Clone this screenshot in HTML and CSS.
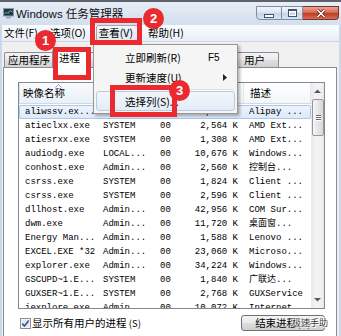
FILE: index.html
```html
<!DOCTYPE html>
<html>
<head>
<meta charset="utf-8">
<title>Windows 任务管理器</title>
<link rel="stylesheet" href="styles.css">
</head>
<body>
<div class="window">
  <div class="titlebar">
    <svg class="app-icon" width="11" height="11" viewBox="0 0 11 11">
      <rect x="0.5" y="0.5" width="10" height="7.5" fill="#24344f" stroke="#8b9ab0"/>
      <polyline points="1.5,6 3.5,4 5,5.5 7,2.5 9.5,4" fill="none" stroke="#4fd14a" stroke-width="1"/>
      <rect x="3" y="8.5" width="5" height="2" fill="#9aa7b8"/>
    </svg>
    <span class="title">Windows 任务管理器</span>
    <div class="caption-buttons">
      <div class="cap-btn cap-min"><span class="min-glyph"></span></div>
      <div class="cap-btn cap-max"><span class="max-glyph"></span></div>
      <div class="cap-btn cap-close">
        <svg width="10" height="9" viewBox="0 0 10 9"><path d="M1.5 1 L8.5 8 M8.5 1 L1.5 8" stroke="#5a1b12" stroke-width="3"/><path d="M1.5 1 L8.5 8 M8.5 1 L1.5 8" stroke="#fff" stroke-width="1.6"/></svg>
      </div>
    </div>
  </div>
  <div class="client">
    <div class="menubar">
      <span class="menu-item">文件(F)</span>
      <span class="menu-item">选项(O)</span>
      <span class="menu-item open">查看(V)</span>
      <span class="menu-item">帮助(H)</span>
    </div>
    <div class="tabs">
      <span class="tab tab-first">应用程序</span>
      <span class="tab selected">进程</span>
      <span class="tab">服务</span>
      <span class="tab">性能</span>
      <span class="tab">联网</span>
      <span class="tab">用户</span>
    </div>
    <div class="panel">
      <div class="listview">
        <div class="list-content">
          <div class="list-header">
            <div class="hcell sorted">映像名称<svg class="sort-arrow" width="7" height="4" viewBox="0 0 7 4"><path d="M0.5 3.5 L3.5 0.5 L6.5 3.5" fill="none" stroke="#8aa2c2" stroke-width="1"/></svg></div>
            <div class="hcell">用户名</div>
            <div class="hcell">CPU</div>
            <div class="hcell">内存</div>
            <div class="hcell">描述</div>
          </div>
          <div class="rows">
            <div class="row selected"><span>aliwssv.ex...</span><span>SYSTEM</span><span>00</span><span>11,340 K</span><span>Alipay ...</span></div>
            <div class="row"><span>atieclxx.exe</span><span>SYSTEM</span><span>00</span><span>2,564 K</span><span>AMD Ext...</span></div>
            <div class="row"><span>atiesrxx.exe</span><span>SYSTEM</span><span>00</span><span>1,308 K</span><span>AMD Ext...</span></div>
            <div class="row"><span>audiodg.exe</span><span>LOCAL...</span><span>00</span><span>10,676 K</span><span>Windows...</span></div>
            <div class="row"><span>conhost.exe</span><span>Admin...</span><span>00</span><span>2,560 K</span><span>控制台...</span></div>
            <div class="row"><span>csrss.exe</span><span>SYSTEM</span><span>00</span><span>1,824 K</span><span>Client ...</span></div>
            <div class="row"><span>csrss.exe</span><span>SYSTEM</span><span>00</span><span>2,596 K</span><span>Client ...</span></div>
            <div class="row"><span>dllhost.exe</span><span>Admin...</span><span>00</span><span>42,956 K</span><span>COM Sur...</span></div>
            <div class="row"><span>dwm.exe</span><span>Admin...</span><span>00</span><span>11,720 K</span><span>桌面窗...</span></div>
            <div class="row"><span>Energy Man...</span><span>Admin...</span><span>00</span><span>1,588 K</span><span>Lenovo ...</span></div>
            <div class="row"><span>EXCEL.EXE *32</span><span>Admin...</span><span>00</span><span>23,060 K</span><span>Microso...</span></div>
            <div class="row"><span>explorer.exe</span><span>Admin...</span><span>00</span><span>34,224 K</span><span>Windows...</span></div>
            <div class="row"><span>GSCUPD~1.E...</span><span>SYSTEM</span><span>00</span><span>1,840 K</span><span>广联达...</span></div>
            <div class="row"><span>GUXSER~1.E...</span><span>SYSTEM</span><span>00</span><span>2,768 K</span><span>GUXService</span></div>
            <div class="row"><span>iexplore.exe</span><span>Admin...</span><span>00</span><span>10,072 K</span><span>Internet...</span></div>
          </div>
        </div>
        <div class="scrollbar">
          <div class="sb-arrow"><svg width="7" height="4" viewBox="0 0 7 4"><path d="M0 4 L3.5 0.5 L7 4 Z" fill="#5b5b5b"/></svg></div>
          <div class="sb-thumb"><span class="grip"></span><span class="grip"></span><span class="grip"></span></div>
          <div class="sb-track"></div>
          <div class="sb-arrow"><svg width="7" height="4" viewBox="0 0 7 4"><path d="M0 0 L3.5 3.5 L7 0 Z" fill="#5b5b5b"/></svg></div>
        </div>
      </div>
      <div class="bottom-row">
        <div class="check">
          <svg class="checkbox" width="11" height="11" viewBox="0 0 11 11">
            <rect x="0.5" y="0.5" width="10" height="10" fill="#f4f4f4" stroke="#8e8f8f"/>
            <rect x="2" y="2" width="7" height="7" fill="#e2e6ea"/>
            <path d="M2.2 5.6 L4.4 8 L8.8 2.6" fill="none" stroke="#34569a" stroke-width="1.6"/>
          </svg>
          <span>显示所有用户的进程 <span class="accel-key">(S)</span></span>
        </div>
        <div class="button">结束进程(P)</div>
      </div>
    </div>
  </div>

  <div class="dropdown">
    <div class="dd-item"><span class="dd-label">立即刷新(R)</span><span class="dd-accel">F5</span></div>
    <div class="dd-item"><span class="dd-label">更新速度(U)</span><span class="dd-accel"><svg class="sub-arrow" width="4" height="7" viewBox="0 0 4 7"><path d="M0 0 L4 3.5 L0 7 Z" fill="#222"/></svg></span></div>
    <div class="dd-sep"></div>
    <div class="dd-item hot"><span class="dd-label">选择列(S)...</span></div>
  </div>

  <div class="mark mark-1"></div>
  <div class="mark mark-2"></div>
  <div class="mark mark-3"></div>
  <div class="badge badge-1">1</div>
  <div class="badge badge-2">2</div>
  <div class="badge badge-3">3</div>
  <div class="watermark">极速手助</div>
</div>
</body>
</html>
```

FILE: styles.css
```css
html, body {
  margin: 0;
  padding: 0;
  width: 341px;
  height: 336px;
  overflow: hidden;
}

.window {
  position: relative;
  width: 341px;
  height: 336px;
  overflow: hidden;
  background: #cbd8e8;
  font-family: "Noto Sans CJK SC", "Liberation Sans", sans-serif;
  font-size: 10.5px;
  color: #000;
}

/* ---------- title bar ---------- */
.titlebar {
  height: 25px;
  box-sizing: border-box;
  border-top: 2px solid #5e636b;
  background: linear-gradient(#e7eef7, #d3dfed);
  display: flex;
  align-items: center;
  padding: 0 2px 0 3px;
}
.app-icon {
  flex: none;
  margin-right: 2px;
}
.title {
  font-family: "Liberation Sans", "Noto Sans CJK SC", sans-serif;
  font-size: 11.5px;
  color: #111;
  line-height: 14px;
}
.caption-buttons {
  margin-left: auto;
  align-self: flex-start;
  margin-top: 4px;
  display: flex;
}
.cap-btn {
  height: 14px;
  box-sizing: border-box;
  border: 1px solid #7d8da3;
  display: flex;
  align-items: center;
  justify-content: center;
  background: linear-gradient(#f1f5fa, #dbe4ef 48%, #c6d4e5 52%, #d9e4f1);
}
.cap-min {
  width: 26px;
  border-radius: 0 0 0 4px;
}
.cap-max {
  width: 21px;
  border-left: none;
}
.cap-close {
  width: 36px;
  border-left: none;
  border-color: #7b3327;
  border-radius: 0 0 4px 0;
  background: linear-gradient(#e9a796, #d56650 48%, #bf3b22 52%, #d66e52);
}
.min-glyph {
  width: 8px;
  height: 2px;
  margin-top: 5px;
  background: #fff;
  border: 1px solid #44546c;
}
.max-glyph {
  width: 7px;
  height: 5px;
  border: 1px solid #44546c;
  border-top-width: 2px;
  background: transparent;
  box-shadow: inset 0 0 0 1px #fff;
}

/* ---------- client ---------- */
.client {
  margin: 0 2px;
  height: 311px;
  background: #f0f0f0;
  overflow: hidden;
}
.menubar {
  height: 17px;
  box-sizing: border-box;
  display: flex;
  align-items: center;
  gap: 8px;
  background: linear-gradient(#fbfcfe, #e9eef6);
  border-bottom: 1px solid #cdd5e0;
}
.menu-item {
  line-height: 14px;
  padding: 0 1px;
  border: 1px solid transparent;
  border-radius: 2px;
}
.menu-item.open {
  padding: 0 4px 0 2px;
  border-color: #a3a8ae;
  background: linear-gradient(#f4f7fb, #e1e8f1);
}

/* ---------- tabs ---------- */
.tabs {
  height: 25px;
  display: flex;
  align-items: flex-end;
  padding-left: 2px;
  position: relative;
  z-index: 1;
}
.tab {
  height: 15px;
  box-sizing: border-box;
  line-height: 13px;
  padding: 0 13px;
  border: 1px solid #898c95;
  border-bottom: none;
  border-radius: 2px 2px 0 0;
  margin-right: -1px;
  background: linear-gradient(#f3f3f3, #ebebeb 50%, #dedede 50%, #d2d2d2);
}
.tab-first {
  padding: 0 3px;
}
.tab.selected {
  height: 19px;
  line-height: 16px;
  padding: 0 6px;
  margin: 0 -1px -1px -1px;
  background: #fff;
  position: relative;
  z-index: 2;
}

/* ---------- panel ---------- */
.panel {
  margin: 0 2px 0 1px;
  height: 290px;
  box-sizing: border-box;
  border: 1px solid #898c95;
  background: #fff;
  padding: 14px 0 0 14px;
}
.listview {
  width: 307px;
  height: 227px;
  box-sizing: border-box;
  border: 1px solid #828790;
  display: flex;
  overflow: hidden;
  background: #fff;
}
.list-content {
  width: 292px;
  flex: none;
  overflow: hidden;
}
.list-header,
.row {
  display: grid;
  grid-template-columns: 78px 55px 31px 61px 67px;
}
.list-header {
  height: 21px;
  box-sizing: border-box;
  border-bottom: 1px solid #d5d9df;
  background: linear-gradient(#ffffff, #f3f6fa);
}
.hcell {
  position: relative;
  line-height: 20px;
  padding-left: 6px;
  border-right: 1px solid #e3e7ec;
  white-space: nowrap;
  overflow: hidden;
}
.hcell.sorted {
  padding-left: 4px;
  background: linear-gradient(#f7fafd, #e9f0f8);
  box-shadow: inset 1px 0 0 #d6e2f0;
}
.sort-arrow {
  position: absolute;
  left: 36px;
  top: 1px;
}
.rows {
  padding-top: 1px;
}
.row {
  height: 14px;
  line-height: 14px;
  font-family: "Liberation Mono", "Noto Sans CJK SC", monospace;
  font-size: 9px;
  color: #000;
}
.row span {
  white-space: nowrap;
  overflow: hidden;
}
.row span:nth-child(1) { padding-left: 6px; }
.row span:nth-child(2) { padding-left: 6px; }
.row span:nth-child(3) { padding-left: 8px; }
.row span:nth-child(4) { text-align: right; padding-right: 6px; }
.row span:nth-child(5) { padding-left: 5px; }
.row.selected {
  background: linear-gradient(#eef4fd, #dce9f9);
  box-shadow: inset 0 0 0 1px #aac7ec;
  border-radius: 2px;
}

/* ---------- scrollbar ---------- */
.scrollbar {
  width: 13px;
  flex: none;
  display: flex;
  flex-direction: column;
  background: linear-gradient(to right, #e6e6e6, #f2f2f2 30%, #f2f2f2 70%, #e9e9e9);
  box-shadow: inset 1px 0 0 #ececec;
}
.sb-arrow {
  height: 16px;
  flex: none;
  display: flex;
  align-items: center;
  justify-content: center;
}
.sb-thumb {
  height: 37px;
  flex: none;
  margin: 0 0 0 1px;
  box-sizing: border-box;
  border: 1px solid #979797;
  border-radius: 2px;
  background: linear-gradient(to right, #f5f5f5, #e6e6e6 50%, #d8d8d8);
  display: flex;
  flex-direction: column;
  align-items: center;
  justify-content: center;
  gap: 1px;
}
.grip {
  width: 5px;
  height: 1px;
  background: #6b6b6b;
  box-shadow: 0 1px 0 #fff;
}
.sb-track {
  flex: 1;
}

/* ---------- bottom row ---------- */
.bottom-row {
  width: 307px;
  height: 16px;
  margin-top: 6px;
  display: flex;
  align-items: center;
  justify-content: space-between;
}
.check {
  display: flex;
  align-items: center;
  gap: 1px;
  padding-left: 2px;
  line-height: 14px;
}
.checkbox {
  flex: none;
}
.accel-key {
  font-size: 9.5px;
}
.button {
  width: 84px;
  height: 16px;
  box-sizing: border-box;
  border: 1px solid #707070;
  border-radius: 3px;
  background: linear-gradient(#f2f2f2, #ebebeb 50%, #dddddd 50%, #cfcfcf);
  text-align: center;
  line-height: 14px;
}

/* ---------- dropdown menu ---------- */
.dropdown {
  position: absolute;
  left: 93px;
  top: 44px;
  width: 145px;
  height: 70px;
  box-sizing: border-box;
  border: 1px solid #979797;
  background: #f5f5f5;
  padding: 2px 1px;
  box-shadow: 2px 2px 3px rgba(0, 0, 0, 0.3);
  z-index: 5;
}
.dd-item {
  height: 20px;
  box-sizing: border-box;
  display: flex;
  align-items: center;
  padding-left: 28px;
  border: 1px solid transparent;
  border-radius: 3px;
  margin: 0 1px;
}
.dd-label {
  flex: 1;
  white-space: nowrap;
}
.dd-accel {
  width: 26px;
  font-family: "Liberation Sans", sans-serif;
  font-size: 10px;
  display: flex;
  align-items: center;
}
.sub-arrow {
  margin-left: 15px;
}
.dd-sep {
  height: 4px;
  margin-left: 28px;
  margin-right: 2px;
  display: flex;
  flex-direction: column;
  justify-content: center;
}
.dd-sep::before {
  content: "";
  height: 1px;
  background: #e0e0e0;
  box-shadow: 0 1px 0 #fff;
}
.dd-item.hot {
  border-color: #b8cbe3;
  background: linear-gradient(#f2f6fb, #e4ecf6);
}

/* ---------- annotations ---------- */
.mark {
  position: absolute;
  box-sizing: border-box;
  border: 5px solid #ea2a2f;
  z-index: 10;
}
.mark-1 { left: 53px; top: 47px; width: 38px; height: 33px; }
.mark-2 { left: 90px; top: 18px; width: 52px; height: 27px; }
.mark-3 { left: 110px; top: 85px; width: 67px; height: 32px; }

.badge {
  position: absolute;
  width: 21px;
  height: 21px;
  border-radius: 50%;
  background: #ea2a2f;
  color: #fff;
  font-family: "Liberation Sans", sans-serif;
  font-weight: bold;
  font-size: 13px;
  display: flex;
  align-items: center;
  justify-content: center;
  z-index: 11;
}
.badge-1 { left: 35px; top: 30px; }
.badge-2 { left: 143px; top: 8px; }
.badge-3 { left: 169px; top: 80px; }

.watermark {
  position: absolute;
  left: 292px;
  top: 317px;
  font-size: 9px;
  line-height: 12px;
  color: #3a3a3a;
  text-shadow: 0 0 1px #fff, 0 0 2px #fff, 1px 1px 0 #fff, -1px -1px 0 #fff;
  z-index: 12;
}
```
